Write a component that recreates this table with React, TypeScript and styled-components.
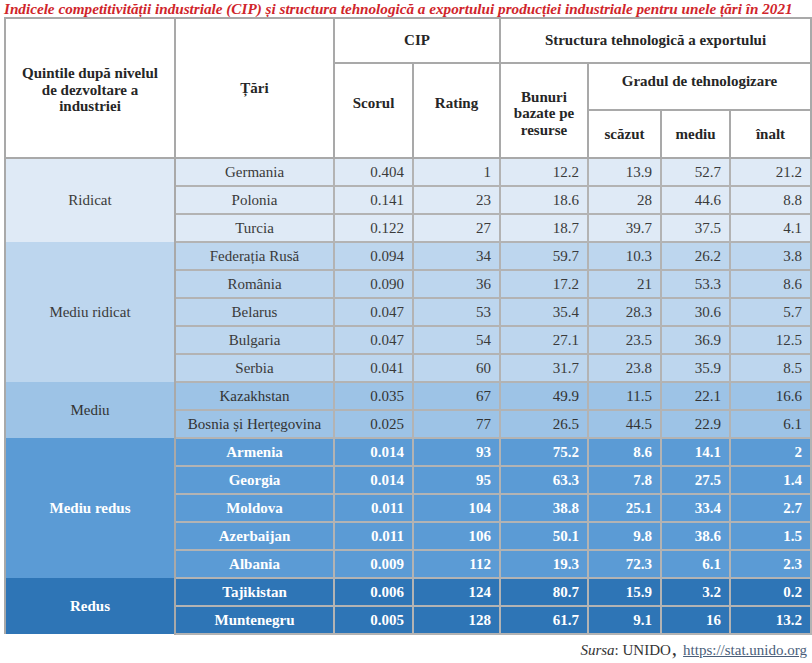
import React from "react";
import styled, { createGlobalStyle } from "styled-components";

const serif = `"Liberation Serif", "Times New Roman", "DejaVu Serif", serif`;

const Global = createGlobalStyle`
  html, body { margin: 0; padding: 0; background: #ffffff; }
  body { font-family: ${serif}; }
  table, th, td { font-family: ${serif}; }
`;

const Page = styled.div`
  width: 812px;
  height: 663px;
  padding: 0 2px 0 4px;
  box-sizing: border-box;
  display: flex;
  flex-direction: column;
  overflow: hidden;
  font-family: ${serif};
`;

const Title = styled.h1`
  margin: 0;
  height: 17px;
  font-family: ${serif};
  font-size: 15.2px;
  line-height: 17px;
  font-weight: bold;
  font-style: italic;
  color: #d0252b;
  white-space: nowrap;
`;

const Table = styled.table`
  border-collapse: collapse;
  table-layout: fixed;
  width: 806px;
  font-family: ${serif};
  font-size: 15px;
  color: #3a3a3a;
`;

const HeadCell = styled.th<{ $h?: number; $pt?: number; $pb?: number }>`
  border: 2px solid #a9a9a9;
  background: #ffffff;
  color: #262626;
  font-family: ${serif};
  font-size: 15px;
  font-weight: bold;
  text-align: center;
  vertical-align: middle;
  padding: ${(p) => p.$pt ?? 0}px 4px ${(p) => p.$pb ?? 0}px;
  line-height: 16.5px;
  height: ${(p) => p.$h ?? 40}px;
  box-sizing: border-box;
`;

type Tier = 0 | 1 | 2 | 3 | 4;

const tierBg = ["#dfeaf6", "#bdd6ee", "#9dc3e6", "#5b9bd5", "#2e75b6"];
const tierFg = ["#3a3a3a", "#3a3a3a", "#333333", "#ffffff", "#ffffff"];

const Row = styled.tr<{ $tier: Tier }>`
  height: 28px;
  background: ${(p) => tierBg[p.$tier]};
  color: ${(p) => tierFg[p.$tier]};
  font-weight: ${(p) => (p.$tier >= 3 ? "bold" : "normal")};
`;

const GroupCell = styled.td`
  border-left: 2px solid #a9a9a9;
  border-right: 2px solid #a9a9a9;
  border-top: none;
  border-bottom: none;
  font-family: ${serif};
  font-size: 15px;
  text-align: center;
  vertical-align: middle;
  padding: 0;
`;

const NameCell = styled.td`
  border: 2px solid #b3b3b3;
  font-family: ${serif};
  font-size: 15px;
  text-align: center;
  padding: 0 2px;
  line-height: 16px;
  white-space: nowrap;
`;

const NumCell = styled.td`
  border: 2px solid #b3b3b3;
  font-family: ${serif};
  font-size: 15px;
  text-align: right;
  padding: 0 8px 0 4px;
  line-height: 16px;
`;

const Footer = styled.div`
  display: flex;
  justify-content: flex-end;
  align-items: baseline;
  height: 18px;
  line-height: 18px;
  padding: 4px 3px 0 0;
  font-family: ${serif};
  font-size: 15px;
  color: #333333;
`;

const Italic = styled.span`
  font-style: italic;
`;

const Comma = styled.span`
  font-size: 21px;
  line-height: 18px;
  margin: 0 6px 0 1px;
`;

const Link = styled.a`
  color: #4a5e7a;
  text-decoration: underline;
`;

type Country = { n: string; v: (string | number)[] };
type Group = { label: string; tier: Tier; rows: Country[] };

const groups: Group[] = [
  {
    label: "Ridicat",
    tier: 0,
    rows: [
      { n: "Germania", v: ["0.404", 1, "12.2", "13.9", "52.7", "21.2"] },
      { n: "Polonia", v: ["0.141", 23, "18.6", "28", "44.6", "8.8"] },
      { n: "Turcia", v: ["0.122", 27, "18.7", "39.7", "37.5", "4.1"] },
    ],
  },
  {
    label: "Mediu ridicat",
    tier: 1,
    rows: [
      { n: "Federația Rusă", v: ["0.094", 34, "59.7", "10.3", "26.2", "3.8"] },
      { n: "România", v: ["0.090", 36, "17.2", "21", "53.3", "8.6"] },
      { n: "Belarus", v: ["0.047", 53, "35.4", "28.3", "30.6", "5.7"] },
      { n: "Bulgaria", v: ["0.047", 54, "27.1", "23.5", "36.9", "12.5"] },
      { n: "Serbia", v: ["0.041", 60, "31.7", "23.8", "35.9", "8.5"] },
    ],
  },
  {
    label: "Mediu",
    tier: 2,
    rows: [
      { n: "Kazakhstan", v: ["0.035", 67, "49.9", "11.5", "22.1", "16.6"] },
      { n: "Bosnia și Herțegovina", v: ["0.025", 77, "26.5", "44.5", "22.9", "6.1"] },
    ],
  },
  {
    label: "Mediu redus",
    tier: 3,
    rows: [
      { n: "Armenia", v: ["0.014", 93, "75.2", "8.6", "14.1", "2"] },
      { n: "Georgia", v: ["0.014", 95, "63.3", "7.8", "27.5", "1.4"] },
      { n: "Moldova", v: ["0.011", 104, "38.8", "25.1", "33.4", "2.7"] },
      { n: "Azerbaijan", v: ["0.011", 106, "50.1", "9.8", "38.6", "1.5"] },
      { n: "Albania", v: ["0.009", 112, "19.3", "72.3", "6.1", "2.3"] },
    ],
  },
  {
    label: "Redus",
    tier: 4,
    rows: [
      { n: "Tajikistan", v: ["0.006", 124, "80.7", "15.9", "3.2", "0.2"] },
      { n: "Muntenegru", v: ["0.005", 128, "61.7", "9.1", "16", "13.2"] },
    ],
  },
];

const widths = [170, 159, 79, 87, 88, 73, 69, 81];

export default function App() {
  return (
    <>
      <Global />
      <Page>
        <Title>
          Indicele competitivității industriale (CIP) și structura tehnologică a exportului producției industriale pentru unele țări în 2021
        </Title>
        <Table>
          <colgroup>
            {widths.map((w, i) => (
              <col key={i} style={{ width: w }} />
            ))}
          </colgroup>
          <thead>
            <tr>
              <HeadCell rowSpan={3} $pt={4}>
                Quintile după nivelul
                <br />
                de dezvoltare a
                <br />
                industriei
              </HeadCell>
              <HeadCell rowSpan={3}>Țări</HeadCell>
              <HeadCell colSpan={2} $h={45}>CIP</HeadCell>
              <HeadCell colSpan={4} $h={45}>Structura tehnologică a exportului</HeadCell>
            </tr>
            <tr>
              <HeadCell rowSpan={2} $pb={14}>Scorul</HeadCell>
              <HeadCell rowSpan={2} $pb={14}>Rating</HeadCell>
              <HeadCell rowSpan={2} $pt={6}>
                Bunuri
                <br />
                bazate pe
                <br />
                resurse
              </HeadCell>
              <HeadCell colSpan={3} $h={47} $pb={10}>Gradul de tehnologizare</HeadCell>
            </tr>
            <tr>
              <HeadCell $h={48}>scăzut</HeadCell>
              <HeadCell $h={48}>mediu</HeadCell>
              <HeadCell $h={48}>înalt</HeadCell>
            </tr>
          </thead>
          <tbody>
            {groups.map((g) =>
              g.rows.map((r, i) => (
                <Row key={r.n} $tier={g.tier}>
                  {i === 0 && <GroupCell rowSpan={g.rows.length}>{g.label}</GroupCell>}
                  <NameCell>{r.n}</NameCell>
                  {r.v.map((x, j) => (
                    <NumCell key={j}>{x}</NumCell>
                  ))}
                </Row>
              ))
            )}
          </tbody>
        </Table>
        <Footer>
          <Italic>Sursa</Italic>: UNIDO<Comma>,</Comma>
          <Link href="#">https://stat.unido.org</Link>
        </Footer>
      </Page>
    </>
  );
}
